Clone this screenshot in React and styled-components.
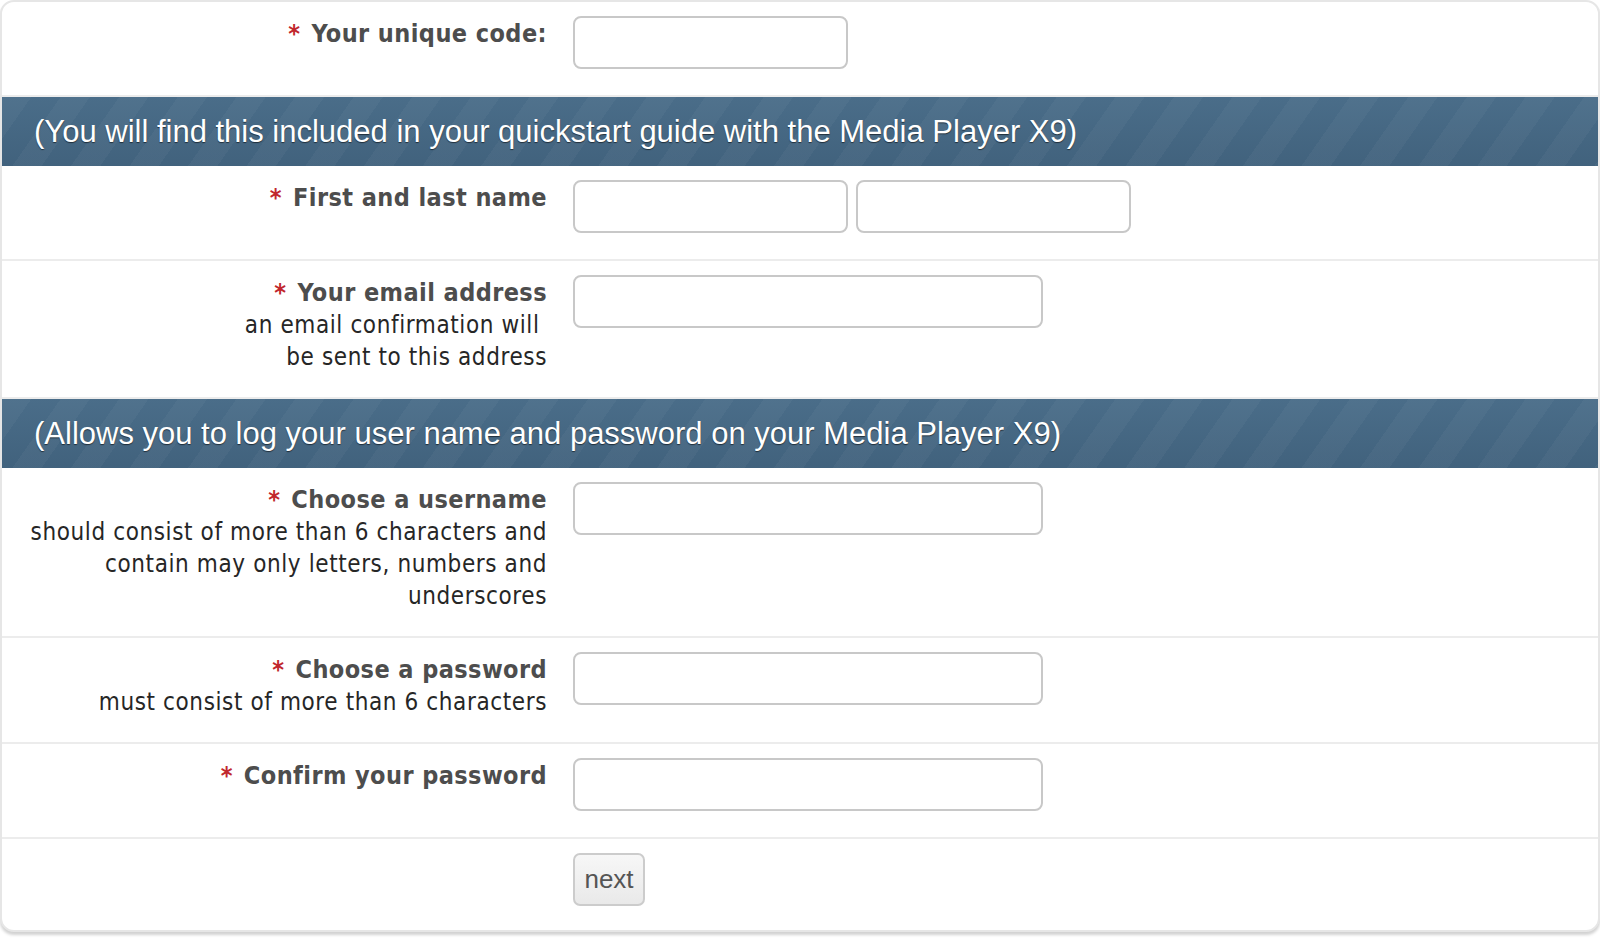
import React from 'react';
import styled, { createGlobalStyle } from 'styled-components';

const Global = createGlobalStyle`
  html, body { margin: 0; padding: 0; background: #ffffff; }
  body { width: 1600px; height: 940px; overflow: hidden; }
`;

const Card = styled.form`
  box-sizing: border-box;
  width: 1600px;
  margin: 0;
  border: 2px solid #e6e6e6;
  border-radius: 14px;
  overflow: hidden;
  background: #ffffff;
  box-shadow: 0 3px 3px rgba(0, 0, 0, 0.18);
`;

const Row = styled.div`
  display: grid;
  grid-template-columns: 545px 1fr;
  column-gap: 26px;
  align-items: start;
  padding: 14px 0 ${p => (p.$last ? '24px' : '26px')};
  border-bottom: ${p => (p.$last ? 'none' : '2px solid #ececec')};
`;

const Label = styled.div`
  padding-top: 2px;
  margin-bottom: -2px;
  text-align: right;
  font-family: "DejaVu Sans Condensed", "DejaVu Sans", sans-serif;
  font-stretch: condensed;
  font-size: 24px;
  line-height: 32px;
  color: #222222;
`;

const Title = styled.div`
  font-weight: bold;
  font-size: 25px;
  color: #4d4d4d;
  letter-spacing: 0.42px;
  white-space: nowrap;
`;

const Star = styled.span`
  color: #c1272d;
  margin-right: 11px;
`;

const Hint = styled.div`
  white-space: nowrap;
  letter-spacing: 0.6px;
  color: #262626;
`;

const Fields = styled.div`
  display: flex;
  gap: 8px;
`;

const Input = styled.input`
  box-sizing: border-box;
  width: ${p => p.$w}px;
  height: 53px;
  border: 2px solid #c8c8c8;
  border-radius: 8px;
  background: #ffffff;
  padding: 0 10px;
  font-family: "Liberation Sans", Arial, sans-serif;
  font-size: 24px;
  outline: none;
`;

const Banner = styled.div`
  height: 69px;
  display: flex;
  align-items: center;
  padding-left: 32px;
  background-color: #45687f;
  background-image:
    repeating-linear-gradient(125deg, rgba(255, 255, 255, 0.035) 0 24px, rgba(255, 255, 255, 0) 24px 48px),
    linear-gradient(180deg, #4a6d89 0%, #41627d 100%);
  color: #ffffff;
  font-family: "Liberation Sans", Arial, sans-serif;
  font-size: 31px;
  text-shadow: 0 1px 1px rgba(0, 0, 0, 0.55);
  white-space: nowrap;
`;

const Button = styled.button`
  box-sizing: border-box;
  width: 72px;
  height: 53px;
  border: 2px solid #cccccc;
  border-radius: 7px;
  background: linear-gradient(180deg, #f7f7f7 0%, #e9e9e9 100%);
  color: #555555;
  font-family: "Liberation Sans", Arial, sans-serif;
  font-size: 26px;
  padding: 0;
  cursor: pointer;
`;

function Field({ title, hints = [], children, last }) {
  return (
    <Row $last={last}>
      <Label>
        {title ? (
          <Title>
            <Star>*</Star>
            {title}
          </Title>
        ) : null}
        {hints.map((h, i) => (
          <Hint key={i}>{h}</Hint>
        ))}
      </Label>
      <Fields>{children}</Fields>
    </Row>
  );
}

export default function App() {
  return (
    <>
      <Global />
      <Card onSubmit={e => e.preventDefault()}>
        <Field title="Your unique code:">
          <Input $w={275} type="text" />
        </Field>
        <Banner>(You will find this included in your quickstart guide with the Media Player X9)</Banner>
        <Field title="First and last name">
          <Input $w={275} type="text" />
          <Input $w={275} type="text" />
        </Field>
        <Field
          title="Your email address"
          hints={['an email confirmation will\u00a0', 'be sent to this address']}
        >
          <Input $w={470} type="text" />
        </Field>
        <Banner>(Allows you to log your user name and password on your Media Player X9)</Banner>
        <Field
          title="Choose a username"
          hints={[
            'should consist of more than 6 characters and',
            'contain may only letters, numbers and',
            'underscores',
          ]}
        >
          <Input $w={470} type="text" />
        </Field>
        <Field title="Choose a password" hints={['must consist of more than 6 characters']}>
          <Input $w={470} type="password" />
        </Field>
        <Field title="Confirm your password">
          <Input $w={470} type="password" />
        </Field>
        <Field last>
          <Button type="submit">next</Button>
        </Field>
      </Card>
    </>
  );
}
